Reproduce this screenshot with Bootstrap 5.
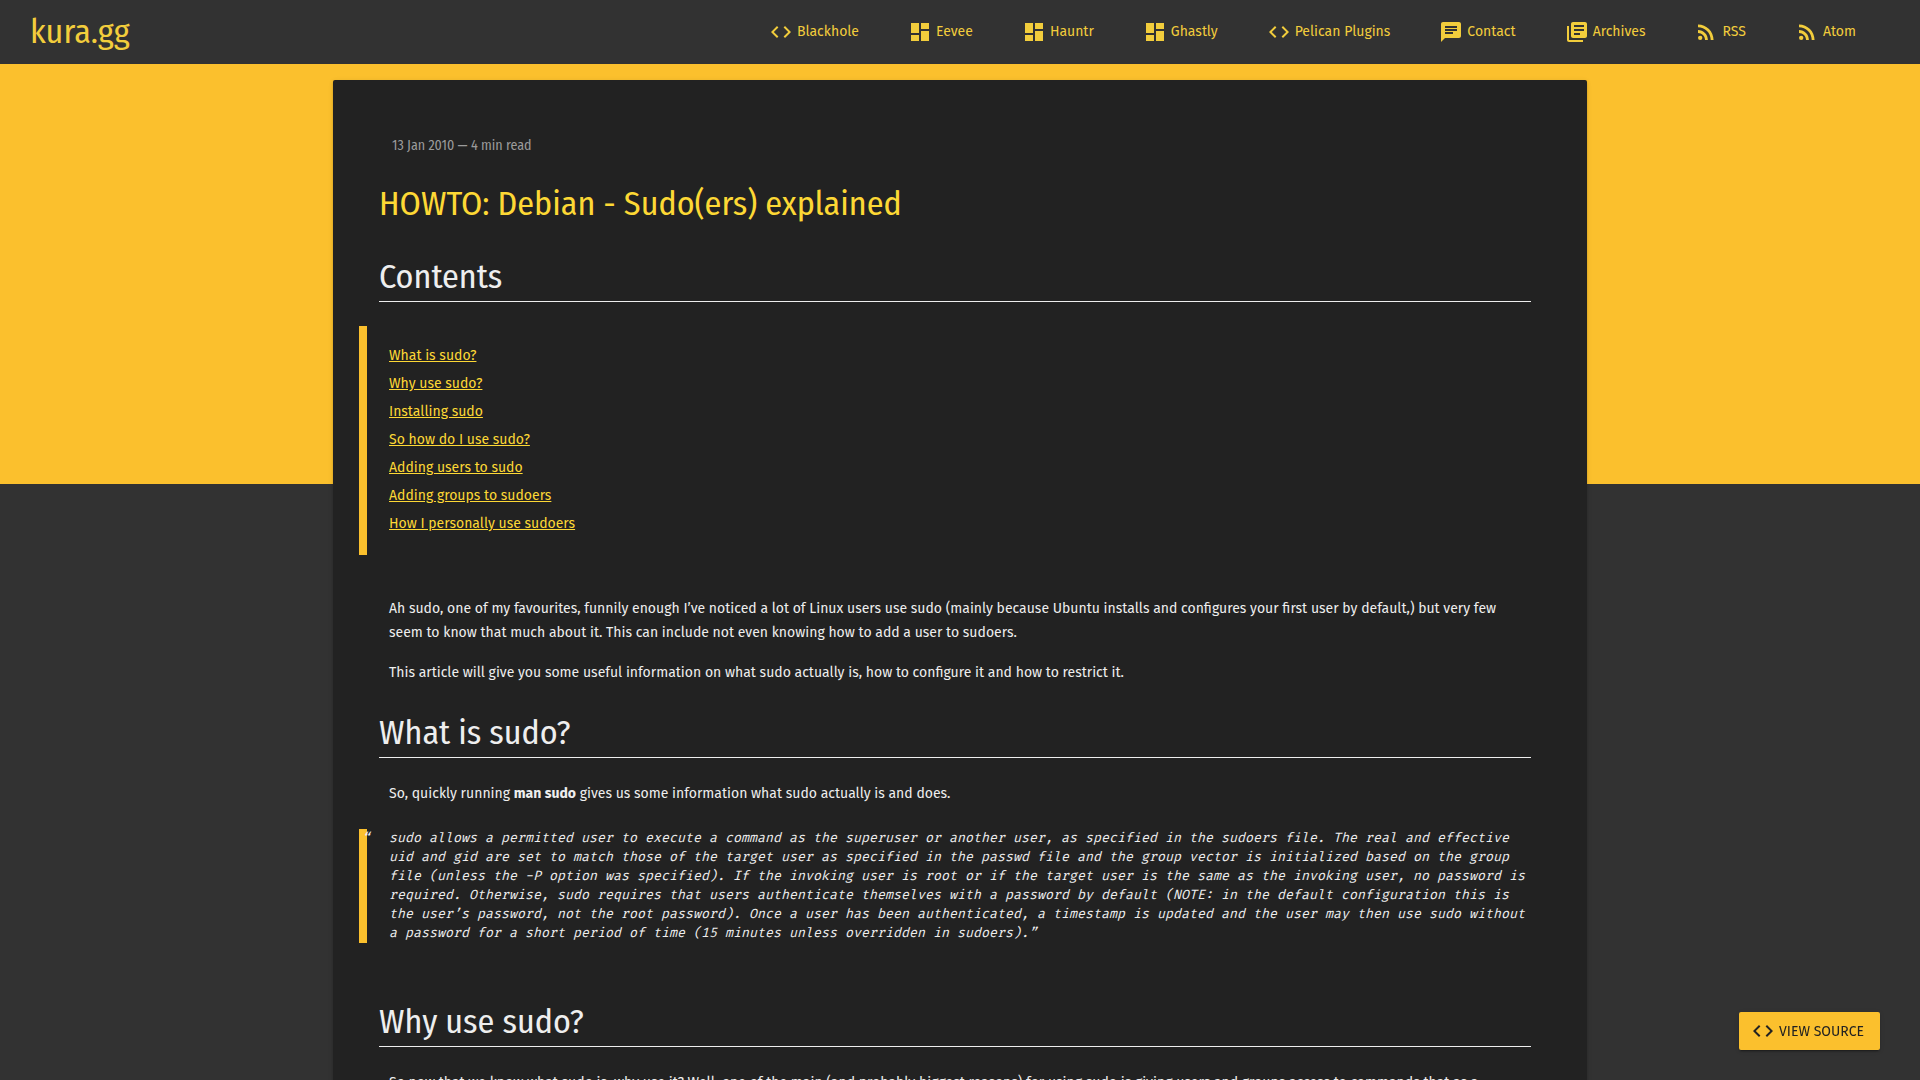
<!DOCTYPE html>
<html lang="en">
<head>
<meta charset="utf-8">
<meta name="viewport" content="width=device-width, initial-scale=1">
<title>HOWTO: Debian - Sudo(ers) explained - kura.gg</title>
<link href="https://cdn.jsdelivr.net/npm/bootstrap@5.3.0/dist/css/bootstrap.min.css" rel="stylesheet">
<style>
body{background:#323232 linear-gradient(#fbc02d,#fbc02d) 0 0/100% 484px no-repeat;color:#eee;font:400 14px/24px "Fira Sans","Noto Sans",sans-serif}
.site-header{background:#323232;min-height:64px;padding:0 40px 0 30px}
.site-header a{color:#f2cd3c;text-decoration:none}
.site-header a:hover{color:#fdd835}
.site-brand,.post-title,.post-heading,.post-date{font-family:"Fira Sans Condensed","Fira Sans","Noto Sans",sans-serif;font-weight:400}
.site-brand{font-size:34px;line-height:40px}
.site-nav a{padding:0 24px 0 25px;line-height:24px}
.icon{width:24px;height:24px;fill:currentColor;flex:none}
.post{max-width:1254px;margin-top:16px;padding:54px 56px 54px 46px;background:#222;border-radius:2px;box-shadow:0 2px 2px rgba(0,0,0,.14),0 3px 1px -2px rgba(0,0,0,.2),0 1px 5px rgba(0,0,0,.12)}
.post-date{color:#9b9b9b;padding-left:13px;margin-bottom:26px}
.post-title{color:#fdd835;font-size:34px;line-height:40px;margin:0 0 33px}
.post-heading{font-size:34px;line-height:40px;margin:28px 0 24px;padding-bottom:4px;border-bottom:1px solid #eee}
.post p{margin:0 0 16px;padding:0 10px}
.toc,.quoted{border-left:8px solid #fbc02d;margin-left:-20px}
.toc{padding:16px 0 17px 22px;margin-bottom:42px}
.toc li{line-height:28px}
.toc a{color:#fdd835;text-decoration:underline}
.quoted{position:relative;margin-top:23px;margin-bottom:59px;padding-left:22px;font:italic 400 13px/19px "Fira Code","Fira Mono","Noto Sans Mono",monospace}
.quote-mark{position:absolute;left:-5px;top:0}
.source-btn{right:40px;bottom:30px;height:38px;padding:0 16px 0 12px;background:#fbc02d;color:#222;font-size:14px;border:0;border-radius:2px;box-shadow:0 2px 2px rgba(0,0,0,.14),0 3px 1px -2px rgba(0,0,0,.2),0 1px 5px rgba(0,0,0,.12)}
.source-btn:hover{background:#fdd835;color:#222}
</style>
</head>
<body>
<svg class="d-none" aria-hidden="true">
<symbol id="i-code" viewBox="0 0 24 24"><path d="M9.4 16.6 4.8 12l4.600-4.600L8 6l-6 6 6 6 1.400-1.400zm5.200 0 4.600-4.600-4.600-4.600L16 6l6 6-6 6-1.400-1.400z"/></symbol>
<symbol id="i-dash" viewBox="0 0 24 24"><path d="M3 13h8V3H3v10zm0 8h8v-6H3v6zm10 0h8V11h-8v10zm0-18v6h8V3h-8z"/></symbol>
<symbol id="i-chat" viewBox="0 0 24 24"><path d="M20 2H4c-1.100 0-1.990.9-1.990 2L2 22l4-4h14c1.100 0 2-.9 2-2V4c0-1.100-.9-2-2-2zM6 9h12v2H6V9zm8 5H6v-2h8v2zm4-6H6V6h12v2z"/></symbol>
<symbol id="i-books" viewBox="0 0 24 24"><path d="M4 6H2v14c0 1.100.9 2 2 2h14v-2H4V6zm16-4H8c-1.100 0-2 .9-2 2v12c0 1.100.9 2 2 2h12c1.100 0 2-.9 2-2V4c0-1.100-.9-2-2-2zm-1 9H9V9h10v2zm-4 4H9v-2h6v2zm4-8H9V5h10v2z"/></symbol>
<symbol id="i-rss" viewBox="0 0 24 24"><circle cx="6.180" cy="17.820" r="2.180"/><path d="M4 4.440v2.830c7.030 0 12.730 5.700 12.730 12.730h2.830c0-8.590-6.970-15.560-15.560-15.560zm0 5.660v2.830c3.900 0 7.070 3.170 7.070 7.070h2.830c0-5.470-4.430-9.900-9.900-9.900z"/></symbol>
</svg>

<header class="site-header d-flex flex-wrap align-items-center justify-content-between">
  <a class="site-brand" href="#">kura.gg</a>
  <nav class="site-nav d-flex flex-wrap" aria-label="Main">
    <a class="d-flex align-items-center gap-1" href="#"><svg class="icon"><use href="#i-code"/></svg>Blackhole</a>
    <a class="d-flex align-items-center gap-1" href="#"><svg class="icon"><use href="#i-dash"/></svg>Eevee</a>
    <a class="d-flex align-items-center gap-1" href="#"><svg class="icon"><use href="#i-dash"/></svg>Hauntr</a>
    <a class="d-flex align-items-center gap-1" href="#"><svg class="icon"><use href="#i-dash"/></svg>Ghastly</a>
    <a class="d-flex align-items-center gap-1" href="#"><svg class="icon"><use href="#i-code"/></svg>Pelican Plugins</a>
    <a class="d-flex align-items-center gap-1" href="#"><svg class="icon"><use href="#i-chat"/></svg>Contact</a>
    <a class="d-flex align-items-center gap-1" href="#"><svg class="icon"><use href="#i-books"/></svg>Archives</a>
    <a class="d-flex align-items-center gap-1" href="#"><svg class="icon"><use href="#i-rss"/></svg>RSS</a>
    <a class="d-flex align-items-center gap-1" href="#"><svg class="icon"><use href="#i-rss"/></svg>Atom</a>
  </nav>
</header>

<main class="post mx-auto">
  <div class="post-date">13 Jan 2010 — 4 min read</div>
  <h1 class="post-title">HOWTO: Debian - Sudo(ers) explained</h1>
  <h2 class="post-heading">Contents</h2>
  <div class="toc">
    <ul class="list-unstyled mb-0">
      <li><a href="#what">What is sudo?</a></li>
      <li><a href="#why">Why use sudo?</a></li>
      <li><a href="#">Installing sudo</a></li>
      <li><a href="#">So how do I use sudo?</a></li>
      <li><a href="#">Adding users to sudo</a></li>
      <li><a href="#">Adding groups to sudoers</a></li>
      <li><a href="#">How I personally use sudoers</a></li>
    </ul>
  </div>
  <p>Ah sudo, one of my favourites, funnily enough I’ve noticed a lot of Linux users use sudo (mainly because Ubuntu installs and configures your first user by default,) but very few seem to know that much about it. This can include not even knowing how to add a user to sudoers.</p>
  <p>This article will give you some useful information on what sudo actually is, how to configure it and how to restrict it.</p>
  <h2 class="post-heading" id="what">What is sudo?</h2>
  <p>So, quickly running <strong>man sudo</strong> gives us some information what sudo actually is and does.</p>
  <blockquote class="quoted"><span class="quote-mark">“</span>sudo allows a permitted user to execute a command as the superuser or another user, as specified in the sudoers file. The real and effective uid and gid are set to match those of the target user as specified in the passwd file and the group vector is initialized based on the group file (unless the -P option was specified). If the invoking user is root or if the target user is the same as the invoking user, no password is required. Otherwise, sudo requires that users authenticate themselves with a password by default (NOTE: in the default configuration this is the user’s password, not the root password). Once a user has been authenticated, a timestamp is updated and the user may then use sudo without a password for a short period of time (15 minutes unless overridden in sudoers).”</blockquote>
  <h2 class="post-heading" id="why">Why use sudo?</h2>
  <p>So now that we know what sudo is, why use it? Well, one of the main (and probably biggest reasons) for using sudo is giving users and groups access to commands that as a</p>
</main>

<button type="button" class="source-btn btn position-fixed d-flex align-items-center gap-1"><svg class="icon"><use href="#i-code"/></svg>VIEW SOURCE</button>
<script src="https://cdn.jsdelivr.net/npm/bootstrap@5.3.0/dist/js/bootstrap.bundle.min.js"></script>
</body>
</html>
